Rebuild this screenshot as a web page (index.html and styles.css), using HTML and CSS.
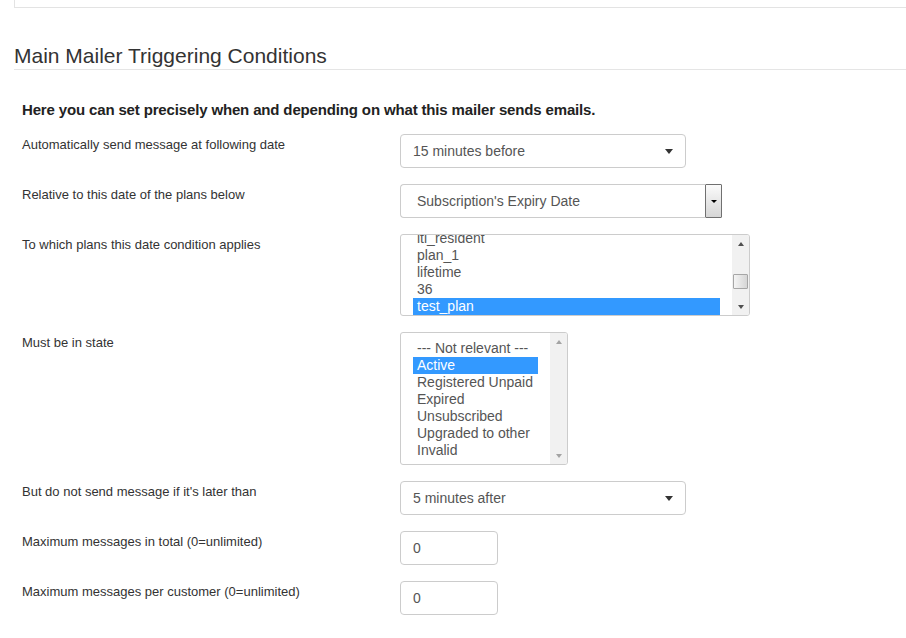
FILE: index.html
```html
<!DOCTYPE html>
<html>
<head>
<meta charset="utf-8">
<link rel="stylesheet" href="styles.css">
</head>
<body>
<div class="topbox"></div>
<h2 class="title">Main Mailer Triggering Conditions</h2>
<p class="intro">Here you can set precisely when and depending on what this mailer sends emails.</p>
<div class="form">
  <div class="label">Automatically send message at following date</div>
  <div class="select w286"><span>15 minutes before</span><span class="caret"></span></div>

  <div class="label">Relative to this date of the plans below</div>
  <div class="select2">
    <div class="select2-field">Subscription's Expiry Date</div>
    <div class="select2-btn"><span class="btn-arrow"></span></div>
  </div>

  <div class="label">To which plans this date condition applies</div>
  <div class="listbox lb1">
    <div class="lb-items scrolled">
      <div class="opt">itl_resident</div>
      <div class="opt">plan_1</div>
      <div class="opt">lifetime</div>
      <div class="opt">36</div>
      <div class="opt sel">test_plan</div>
    </div>
    <div class="sb">
      <div class="sb-btn"><span class="arrow-up"></span></div>
      <div class="thumb"></div>
      <div class="sb-btn"><span class="arrow-down"></span></div>
    </div>
  </div>

  <div class="label">Must be in state</div>
  <div class="listbox lb2">
    <div class="lb-items padded">
      <div class="opt">--- Not relevant ---</div>
      <div class="opt sel">Active</div>
      <div class="opt">Registered Unpaid</div>
      <div class="opt">Expired</div>
      <div class="opt">Unsubscribed</div>
      <div class="opt">Upgraded to other</div>
      <div class="opt">Invalid</div>
    </div>
    <div class="sb inactive">
      <div class="sb-btn"><span class="arrow-up"></span></div>
      <div class="sb-btn"><span class="arrow-down"></span></div>
    </div>
  </div>

  <div class="label">But do not send message if it's later than</div>
  <div class="select w286"><span>5 minutes after</span><span class="caret"></span></div>

  <div class="label">Maximum messages in total (0=unlimited)</div>
  <div class="input">0</div>

  <div class="label">Maximum messages per customer (0=unlimited)</div>
  <div class="input">0</div>
</div>
</body>
</html>
```
FILE: styles.css
```css
* { box-sizing: border-box; }
html, body { margin: 0; padding: 0; background: #fff; }
body {
  font-family: "Liberation Sans", Arial, sans-serif;
  color: #333;
  overflow: hidden;
}
.topbox {
  height: 8px;
  margin-left: 14px;
  border-left: 1px solid #e3e3e3;
  border-bottom: 1px solid #e3e3e3;
}
.title {
  margin: 36px 0 0 14px;
  font-size: 21px;
  line-height: 23px;
  font-weight: normal;
  color: #333;
  padding-bottom: 2px;
  border-bottom: 1px solid #e5e5e5;
}
.intro {
  margin: 30px 0 0 22px;
  font-size: 15px;
  line-height: 20px;
  font-weight: bold;
  letter-spacing: -0.15px;
  color: #222;
}
.form {
  margin-top: 14px;
  padding-left: 22px;
  display: grid;
  grid-template-columns: 378px max-content;
  row-gap: 16px;
  align-items: start;
}
.label {
  font-size: 13px;
  line-height: 17px;
  padding-top: 1.5px;
  color: #333;
}
.select {
  height: 34px;
  border: 1px solid #ccc;
  border-radius: 4px;
  padding: 6px 12px;
  display: flex;
  align-items: center;
  justify-content: space-between;
  font-size: 14px;
  line-height: 20px;
  color: #555;
}
.w286 { width: 286px; }
.caret {
  width: 0;
  height: 0;
  border-left: 4px solid transparent;
  border-right: 4px solid transparent;
  border-top: 5px solid #333;
}
.select2 {
  width: 322px;
  height: 34px;
  display: flex;
}
.select2-field {
  flex: 1;
  border: 1px solid #ccc;
  border-right: none;
  border-radius: 4px 0 0 4px;
  padding: 6px 16px;
  font-size: 14px;
  line-height: 20px;
  color: #555;
}
.select2-btn {
  width: 17px;
  border: 1px solid #707070;
  border-radius: 1px;
  background: linear-gradient(#fbfbfb, #e8e8e8 50%, #d6d6d6);
  display: flex;
  align-items: center;
  justify-content: center;
}
.btn-arrow {
  width: 0;
  height: 0;
  border-left: 3px solid transparent;
  border-right: 3px solid transparent;
  border-top: 3px solid #000;
}
.listbox {
  display: flex;
  border: 1px solid #ccc;
  border-radius: 3px;
  overflow: hidden;
  font-size: 14px;
  line-height: 17px;
  color: #555;
}
.lb1 { width: 350px; height: 82px; }
.lb2 { width: 168px; height: 133px; }
.lb-items {
  flex: 1;
  padding: 0 12px;
  overflow: hidden;
}
.lb-items.scrolled .opt:first-child { margin-top: -5px; }
.lb-items.padded { padding-top: 7px; }
.opt {
  height: 17px;
  padding: 0 4px;
  white-space: nowrap;
}
.opt.sel {
  background: #3399ff;
  color: #fff;
}
.sb {
  width: 17px;
  background: #f1f1f1;
  display: flex;
  flex-direction: column;
  justify-content: space-between;
  position: relative;
}
.sb-btn {
  height: 17px;
  display: flex;
  align-items: center;
  justify-content: center;
}
.arrow-up {
  width: 0;
  height: 0;
  border-left: 3.5px solid transparent;
  border-right: 3.5px solid transparent;
  border-bottom: 4px solid #505050;
}
.arrow-down {
  width: 0;
  height: 0;
  border-left: 3.5px solid transparent;
  border-right: 3.5px solid transparent;
  border-top: 4px solid #505050;
}
.sb.inactive .arrow-up { border-bottom-color: #a3a3a3; }
.sb.inactive .arrow-down { border-top-color: #a3a3a3; }
.thumb {
  position: absolute;
  top: 39px;
  left: 1px;
  width: 15px;
  height: 15px;
  border: 1px solid #a6a6a6;
  border-radius: 1px;
  background: linear-gradient(to right, #f4f4f4, #e2e2e2 60%, #d6d6d6);
}
.input {
  width: 98px;
  height: 34px;
  border: 1px solid #ccc;
  border-radius: 4px;
  padding: 6px 12px;
  font-size: 14px;
  line-height: 20px;
  color: #555;
}
```
